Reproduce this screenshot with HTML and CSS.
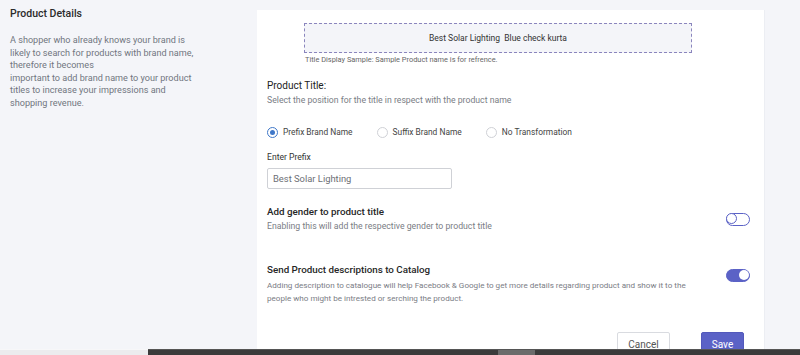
FILE: index.html
```html
<!DOCTYPE html>
<html lang="en">
<head>
    <meta charset="UTF-8">
    <meta name="viewport" content="width=device-width, initial-scale=1.0">
    <title>Product Details</title>
    <link rel="stylesheet" href="styles.css">
</head>
<body>
    <div class="page">
        <div class="side">
            <h3 class="side-title">Product Details</h3>
            <p class="side-text">
                A shopper who already knows your brand is<br>
                likely to search for products with brand name,<br>
                therefore it becomes<br>
                important to add brand name to your product<br>
                titles to increase your impressions and<br>
                shopping revenue.
            </p>
        </div>
        <div class="card">
            <div class="sample">Best Solar Lighting&nbsp; Blue check kurta</div>
            <p class="sample-note">Title Display Sample: Sample Product name is for refrence.</p>

            <h4 class="field-title title-first">Product Title:</h4>
            <p class="field-sub">Select the position for the title in respect with the product name</p>

            <div class="radios">
                <label class="radio checked"><span class="dot"></span>Prefix Brand Name</label>
                <label class="radio"><span class="dot"></span>Suffix Brand Name</label>
                <label class="radio"><span class="dot"></span>No Transformation</label>
            </div>

            <p class="input-label">Enter Prefix</p>
            <div class="input">Best Solar Lighting</div>

            <div class="option option-gender">
                <div>
                    <h4 class="field-title">Add gender to product title</h4>
                    <p class="field-sub">Enabling this will add the respective gender to product title</p>
                </div>
                <span class="toggle"></span>
            </div>

            <div class="option option-desc">
                <div>
                    <h4 class="field-title">Send Product descriptions to Catalog</h4>
                    <p class="field-sub desc-sub">Adding description to catalogue will help Facebook &amp; Google to get more details regarding product and show it to the<br>people who might be intrested or serching the product.</p>
                </div>
                <span class="toggle on"></span>
            </div>

            <div class="actions">
                <button class="btn btn-cancel">Cancel</button>
                <button class="btn btn-save">Save</button>
            </div>
        </div>
    </div>
    <div class="scrollbar">
        <span class="scroll-left"></span>
        <span class="scroll-track"><span class="thumb"></span></span>
    </div>
</body>
</html>
```

FILE: styles.css
```css
*{
    margin: 0;
    padding: 0;
    box-sizing: border-box;
}
body{
    background: #f4f5f9;
    font-family: Roboto, "Liberation Sans", Arial, sans-serif;
    color: #333;
    height: 355px;
    overflow: hidden;
}
.page{
    display: flex;
}
.side{
    width: 257px;
    padding: 6px 0 0 10px;
}
.side-title{
    font-size: 10.5px;
    font-weight: 500;
    line-height: 16px;
    color: #2b2b2b;
}
.side-text{
    margin-top: 12px;
    font-size: 9.1px;
    line-height: 12.5px;
    color: #717580;
}
.card{
    width: 508px;
    margin-top: 10px;
    height: 345px;
    background: #fff;
    padding: 13px 14px 0 10px;
    border-right: 1px solid #eceef3;
}
.sample{
    margin-left: 37px;
    width: 388px;
    height: 30px;
    border: 1px dashed #8a85bd;
    background: #f4f5f9;
    font-size: 8.5px;
    line-height: 28px;
    text-align: center;
    color: #333;
}
.sample-note{
    margin-left: 38px;
    font-size: 7.4px;
    line-height: 12px;
    margin-top: 1px;
    color: #666;
}
.field-title{
    font-size: 9.8px;
    font-weight: 500;
    line-height: 14px;
    color: #262626;
}
.title-first{
    margin-top: 13px;
    font-size: 10px;
    font-weight: 400;
    color: #222;
}
.field-sub{
    font-size: 8.7px;
    line-height: 13px;
    color: #7a7d85;
    margin-top: 1px;
}
.radios{
    display: flex;
    gap: 24px;
    margin-top: 18px;
    height: 14px;
    align-items: center;
}
.radio{
    display: flex;
    align-items: center;
    font-size: 8.4px;
    color: #444;
}
.dot{
    width: 11px;
    height: 11px;
    border: 1px solid #cfd1d6;
    border-radius: 50%;
    margin-right: 5px;
    position: relative;
}
.radio.checked .dot{
    border-color: #3f78c9;
}
.radio.checked .dot::after{
    content: "";
    position: absolute;
    left: 2px;
    top: 2px;
    width: 5px;
    height: 5px;
    border-radius: 50%;
    background: #3f78c9;
}
.input-label{
    margin-top: 12px;
    font-size: 8.6px;
    line-height: 13px;
    color: #333;
}
.input{
    margin-top: 4px;
    width: 185px;
    height: 21px;
    border: 1px solid #cfd1d6;
    border-radius: 2px;
    padding-left: 5px;
    font-size: 9.4px;
    line-height: 19px;
    color: #6d6f75;
    background: #fff;
}
.option{
    display: flex;
    justify-content: space-between;
}
.option-gender{
    margin-top: 16px;
    align-items: center;
}
.option-desc{
    margin-top: 30px;
}
.option-desc .toggle{
    margin-top: 6px;
}
.desc-sub{
    margin-top: 2px;
    font-size: 8.1px;
    line-height: 13px;
}
.toggle{
    width: 24px;
    height: 13px;
    border: 1.5px solid #5b62c6;
    border-radius: 7px;
    position: relative;
    flex-shrink: 0;
}
.toggle::after{
    content: "";
    position: absolute;
    left: -1px;
    top: -1px;
    width: 9px;
    height: 9px;
    border: 1.5px solid #5b62c6;
    border-radius: 50%;
    background: #fff;
}
.toggle.on{
    background: #5b62c6;
}
.toggle.on::after{
    left: auto;
    right: 0;
    top: 0;
    width: 10px;
    height: 10px;
    border: none;
}
.actions{
    display: flex;
    justify-content: flex-end;
    gap: 31px;
    margin-top: 27px;
    padding-right: 6px;
}
.btn{
    height: 24px;
    font-family: Roboto, "Liberation Sans", Arial, sans-serif;
    font-size: 10px;
    border-radius: 2px;
}
.btn-cancel{
    width: 53px;
    background: #fff;
    border: 1px solid #d9dbe0;
    color: #555;
}
.btn-save{
    width: 43px;
    background: #5b62c6;
    border: 1px solid #5359bb;
    color: #fff;
}
.scrollbar{
    position: fixed;
    left: 0;
    right: 0;
    bottom: 0;
    height: 6px;
    display: flex;
}
.scroll-left{
    width: 148px;
    background: #ececee;
    border-top: 1px solid #f7f7f9;
}
.scroll-track{
    flex: 1;
    background: #3b3b3b;
    border-top: 1px solid #555;
    position: relative;
}
.thumb{
    position: absolute;
    left: 350px;
    top: 0;
    width: 37px;
    height: 5px;
    background: #6b6b6b;
}
```
